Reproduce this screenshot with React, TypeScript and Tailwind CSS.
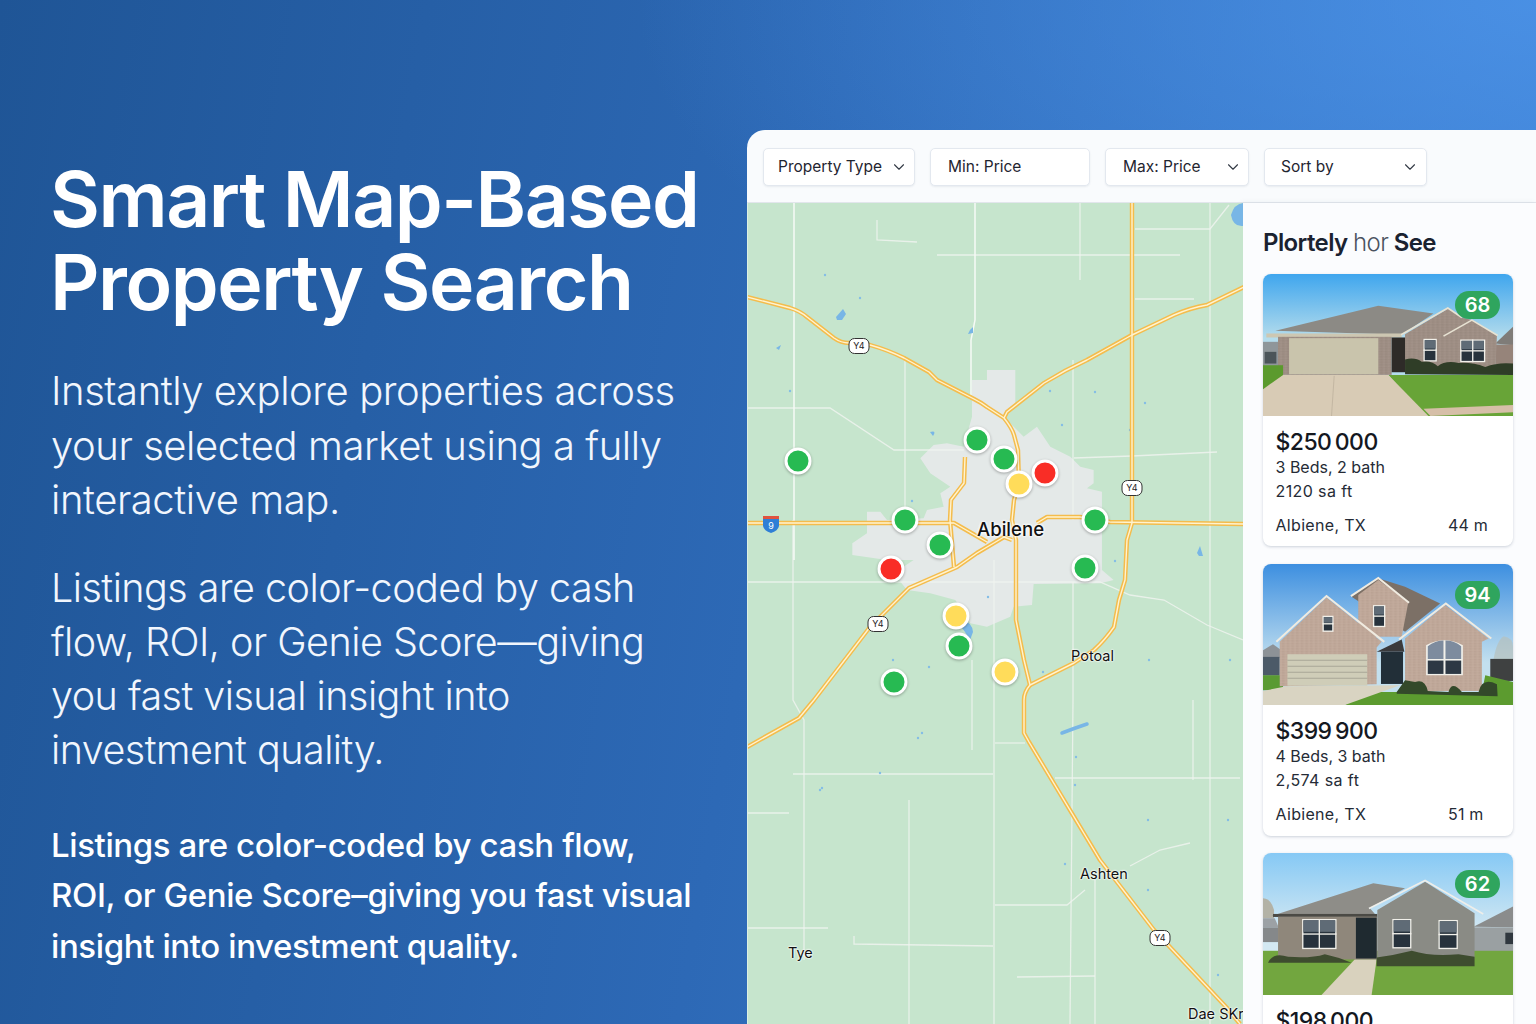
import { ChevronDown } from "lucide-react";

const roads = [
  "M747 297 L790 308 Q800 311 807 317 L834 338 Q841 343 849 343 L870 345 Q888 350 904 358 L929 372 L937 380 L974 399 Q982 403 987 407 L1004 418 Q1012 428 1014 435 L1018 450 L1019 484 L1014 500 L1012 520 L1016 540 L1016 620 L1024 660 L1030 685 Q1024 692 1024 700 L1024 733 L1029 742 L1100 860 L1154 930 L1227 1008 L1240 1024",
  "M1004 418 L1007 412 L1044 383 Q1065 370 1087 360 L1132 335 L1174 315 Q1190 308 1207 305 L1244 287",
  "M1132 203 L1132 523 L1127 540 L1125 580 L1119 600 L1114 627 Q1105 640 1094 650 L1074 663 L1030 685",
  "M747 523 L954 523 L987 542",
  "M1012 540 L1004 537 L977 553 L957 567 L909 588 L870 627 L814 700 L799 718 L747 747",
  "M1037 523 L1047 517 L1080 517 L1110 522 L1244 524",
  "M965 457 L964 483 L951 500 L950 520 L954 567",
];

const minorRoads = [
  "M793 520 L793 700 L804 720 L804 960",
  "M1080 203 L1080 280",
  "M1210 203 L1210 1024",
  "M905 360 L905 510",
  "M1073 360 L1073 520",
  "M1073 582 L1073 700 L1070 1024",
  "M994 560 L994 1024",
  "M972 660 L972 750",
  "M909 800 L909 1024",
  "M1095 880 L1095 1024",
  "M1193 700 L1193 780",
  "M975 255 L1180 255",
  "M747 408 L830 408 L894 450 L964 450",
  "M1074 458 L1132 456 L1217 452",
  "M747 582 L1100 582 L1130 595 L1164 600 L1207 625 L1243 640",
  "M793 774 L993 774",
  "M1055 778 L1240 778",
  "M995 743 L1025 743",
  "M995 905 L1067 905 L1085 890",
  "M854 936 L854 944 L993 946",
  "M1017 977 L1095 976",
  "M747 928 L828 928",
  "M747 813 L789 813",
  "M877 220 L877 240 L917 242",
  "M1135 229 L1210 229 L1229 205",
  "M1135 299 L1194 299",
  "M1130 866 L1160 850 L1190 843",
  "M937 255 L975 255",
];

const majorMinorRoads = ["M794 203 L794 560", "M975 203 L975 320 L971 340 L971 395"];

const water = [
  "M1231 215 Q1234 204 1243 203 L1243 226 Q1233 227 1231 215Z",
  "M836 317 L843 309 L846 314 L842 320 L837 320Z",
  "M970 330 L973 327 L973 333 L968 334Z",
  "M776 348 L781 345 L779 350Z",
  "M962 620 Q972 622 973 632 L970 640 Q964 630 962 628Z",
  "M1197 553 L1200 546 L1203 556 L1199 556Z",
  "M930 432 Q937 430 933 436Z",
];

const waterDots = [
  [825, 275], [860, 298], [1062, 425], [1050, 391], [1095, 392], [1145, 403],
  [1130, 430], [912, 501], [950, 500], [790, 391], [1115, 561], [988, 597],
  [929, 667], [1043, 672], [893, 660], [1230, 660], [1149, 660], [820, 790],
  [918, 738], [922, 733], [880, 773], [822, 788], [1076, 757], [1075, 785],
  [1148, 820], [1148, 890], [1228, 820], [1218, 975], [1065, 864],
];

const pins = [
  { x: 798, y: 461, c: "bg-[#27ba52]" },
  { x: 977, y: 440, c: "bg-[#27ba52]" },
  { x: 1004, y: 459, c: "bg-[#27ba52]" },
  { x: 1045, y: 473, c: "bg-[#f92d26]" },
  { x: 1019, y: 484, c: "bg-[#ffdc5a]" },
  { x: 905, y: 520, c: "bg-[#27ba52]" },
  { x: 940, y: 545, c: "bg-[#27ba52]" },
  { x: 1095, y: 520, c: "bg-[#27ba52]" },
  { x: 1085, y: 568, c: "bg-[#27ba52]" },
  { x: 891, y: 569, c: "bg-[#f92d26]" },
  { x: 956, y: 616, c: "bg-[#ffdc5a]" },
  { x: 959, y: 646, c: "bg-[#27ba52]" },
  { x: 1005, y: 672, c: "bg-[#ffdc5a]" },
  { x: 894, y: 682, c: "bg-[#27ba52]" },
];

const shields = [
  { x: 859, y: 346 },
  { x: 1132, y: 488 },
  { x: 878, y: 624 },
  { x: 1160, y: 938 },
];

const places = [
  { name: "Potoal", x: 1071, y: 647 },
  { name: "Ashten", x: 1080, y: 865 },
  { name: "Tye", x: 788, y: 944 },
  { name: "Dae SKr", x: 1188, y: 1005 },
];

function Win({ x, y, w, h, split }: { x: number; y: number; w: number; h: number; split?: boolean }) {
  return (
    <g>
      <rect x={x} y={y} width={w} height={h} fill="#f1f0ea" />
      <rect x={x + 4} y={y + 4} width={w - 8} height={h - 8} fill="#27323c" />
      <rect x={x + 4} y={y + 4} width={w - 8} height={(h - 8) * 0.42} fill="#5f6b76" />
      <rect x={x} y={y + h * 0.5 - 2} width={w} height={4} fill="#f1f0ea" />
      {split && <rect x={x + w / 2 - 2} y={y} width={4} height={h} fill="#f1f0ea" />}
    </g>
  );
}

function Brick({ id, color }: { id: string; color: string }) {
  return (
    <pattern id={id} width="14" height="8" patternUnits="userSpaceOnUse">
      <rect width="14" height="8" fill={color} />
      <rect y="0" width="7" height="4" fill="#000" opacity="0.03" />
      <rect x="8" y="4" width="6" height="4" fill="#fff" opacity="0.04" />
    </pattern>
  );
}

function HouseOne() {
  return (
    <svg viewBox="55 42 748 425" preserveAspectRatio="none" className="h-full w-full">
      <defs>
        <linearGradient id="sky1" x1="0" y1="0" x2="0" y2="1">
          <stop offset="0" stopColor="#3fa6ee" />
          <stop offset="0.45" stopColor="#b4dcec" />
        </linearGradient>
        <Brick id="brick1" color="#9e8e84" />
      </defs>
      <rect x="55" y="42" width="748" height="425" fill="url(#sky1)" />
      <rect x="55" y="245" width="50" height="72" fill="#8f969a" />
      <rect x="60" y="275" width="35" height="35" fill="#4b5459" />
      <polygon points="750,250 803,200 803,255" fill="#7f7c78" />
      <rect x="750" y="253" width="53" height="60" fill="#96847a" />
      <polygon points="92,212 400,137 565,160 470,224" fill="#8c8a85" />
      <rect x="65" y="220" width="405" height="12" fill="#cdc7b2" />
      <rect x="100" y="230" width="340" height="114" fill="url(#brick1)" />
      <rect x="133" y="234" width="267" height="108" fill="#c9c4ac" />
      <rect x="440" y="232" width="42" height="104" fill="#2e2b28" />
      <polygon points="480,222 610,145 650,172 680,180 755,226 750,332 480,332" fill="url(#brick1)" />
      <path d="M468 224 L608 144 L650 172 M595 228 L680 180 L757 226" fill="none" stroke="#e7e2d2" strokeWidth="5" />
      <Win x={535} y={236} w={40} h={68} />
      <Win x={645} y={238} w={75} h={68} split />
      <path d="M480 342 L480 298 Q510 290 530 305 Q560 300 578 318 Q600 300 640 308 Q680 305 720 320 Q760 305 803 310 L803 344Z" fill="#2f3d27" />
      <rect x="55" y="315" width="60" height="75" fill="#5b9a2d" />
      <polygon points="430,344 803,344 803,467 540,467" fill="#68a437" />
      <polygon points="115,344 430,344 550,467 55,467 55,387" fill="#d8cbb5" />
      <line x1="268" y1="347" x2="260" y2="467" stroke="#b8ad99" strokeWidth="2" />
      <polygon points="535,445 803,434 803,456 556,467" fill="#d6bfa8" />
    </svg>
  );
}

function HouseTwo() {
  return (
    <svg viewBox="55 12 748 422" preserveAspectRatio="none" className="h-full w-full">
      <defs>
        <linearGradient id="sky2" x1="0" y1="0" x2="0" y2="1">
          <stop offset="0" stopColor="#3d8fe0" />
          <stop offset="0.7" stopColor="#c3e0ef" />
        </linearGradient>
        <Brick id="brick2" color="#c0a899" />
      </defs>
      <rect x="55" y="12" width="748" height="422" fill="url(#sky2)" />
      <polygon points="55,270 85,252 110,270 110,292 55,292" fill="#8d9297" />
      <rect x="55" y="290" width="50" height="56" fill="#4c5a68" />
      <path d="M745 296 Q755 240 775 228 Q803 232 803 260 L803 296Z" fill="#b7c0bc" opacity="0.7" />
      <rect x="735" y="296" width="68" height="66" fill="#3f4141" />
      <rect x="55" y="345" width="60" height="45" fill="#5a9a33" />
      <polygon points="300,434 360,395 710,395 720,345 803,365 803,434" fill="#5c9b2f" />
      <polygon points="55,392 125,378 465,375 300,434 55,434" fill="#d9d4c2" />
      <polygon points="400,55 480,80 585,130 480,215 320,110" fill="#7c7066" />
      <polygon points="340,105 400,60 490,125 470,230 340,230" fill="url(#brick2)" />
      <polygon points="105,245 245,112 410,245 395,262 395,372 105,378" fill="url(#brick2)" />
      <polygon points="480,235 600,135 730,235 710,245 710,392 480,392" fill="url(#brick2)" />
      <path d="M95 245 L245 108 L418 245 M318 108 L400 54 L492 128 M462 238 L602 130 L738 235" fill="none" stroke="#f0ebe0" strokeWidth="6" />
      <rect x="128" y="282" width="239" height="94" fill="#cfcdb8" />
      <path d="M128 300 H367 M128 318 H367 M128 336 H367 M128 354 H367" stroke="#a9a796" strokeWidth="3" />
      <polygon points="395,275 470,238 478,275" fill="#3a3a3c" />
      <rect x="408" y="275" width="66" height="96" fill="#222f38" />
      <Win x={233} y={167} w={33} h={48} />
      <Win x={384} y={135} w={37} h={66} />
      <path d="M543 345 V255 Q598 225 653 255 V345Z" fill="#f1f0ea" />
      <path d="M548 296 V258 Q570 241 595 241 V296Z M601 296 V241 Q628 241 648 258 V296Z" fill="#7d8b9e" />
      <rect x="548" y="301" width="47" height="40" fill="#2d3844" />
      <rect x="601" y="301" width="47" height="40" fill="#2d3844" />
      <path d="M455 395 L480 360 L510 365 Q540 355 548 392 L610 395 Q620 360 650 395 L700 395 Q710 350 755 372 L757 408 L455 400Z" fill="#33492a" />
    </svg>
  );
}

function HouseThree() {
  return (
    <svg viewBox="55 880 748 424" preserveAspectRatio="none" className="h-full w-full">
      <defs>
        <linearGradient id="sky3" x1="0" y1="0" x2="0" y2="1">
          <stop offset="0" stopColor="#86c9f5" />
          <stop offset="0.55" stopColor="#d3e8f2" />
        </linearGradient>
      </defs>
      <rect x="55" y="880" width="748" height="424" fill="url(#sky3)" />
      <path d="M55 1015 Q78 1015 88 1050 L88 1075 L55 1075Z" fill="#b3b2a6" />
      <polygon points="55,1075 90,1075 102,1102 55,1102" fill="#9ca1a5" />
      <rect x="55" y="1102" width="46" height="44" fill="#85888a" />
      <polygon points="685,1100 803,1040 803,1102" fill="#8a8c8c" />
      <rect x="685" y="1102" width="118" height="74" fill="#9aa0a2" />
      <rect x="780" y="1118" width="23" height="34" fill="#30383f" />
      <rect x="55" y="1172" width="748" height="132" fill="#72a63f" />
      <polygon points="330,1197 395,1197 380,1304 230,1304" fill="#d9d2be" />
      <polygon points="80,1068 385,970 480,985 375,1045 397,1070" fill="#8e8d88" />
      <rect x="85" y="1062" width="312" height="9" fill="#4b4a45" />
      <rect x="100" y="1070" width="297" height="128" fill="#8f877b" />
      <polygon points="397,1050 540,966 688,1060 688,1196 397,1196" fill="#8a8b85" />
      <path d="M372 1046 L540 962 L714 1062" fill="none" stroke="#eeeeea" strokeWidth="5" />
      <rect x="333" y="1073" width="62" height="122" fill="#1f2a30" />
      <Win x={172} y={1077} w={103} h={90} split />
      <Win x={442} y={1077} w={57} h={88} />
      <Win x={580} y={1080} w={58} h={87} />
      <path d="M70 1208 Q85 1175 130 1190 Q200 1195 240 1182 Q280 1190 320 1208Z" fill="#3e4c2f" />
      <path d="M395 1218 L395 1192 Q450 1185 500 1172 Q560 1190 640 1182 L688 1190 L688 1218Z" fill="#3e4c2f" />
    </svg>
  );
}

const listings = [
  { price: "$250 000", beds: "3 Beds, 2 bath", area: "2120 sa ft", place: "Albiene, TX", dist: "44 m", score: 68, house: <HouseOne />, h: "h-[142px]" },
  { price: "$399 900", beds: "4 Beds, 3 bath", area: "2,574 sa ft", place: "Aibiene, TX", dist: "51 m", score: 94, house: <HouseTwo />, h: "h-[141px]" },
  { price: "$198 000", beds: "3 Beds, 2 bath", area: "1,640 sa ft", place: "Abilene, TX", dist: "38 m", score: 62, house: <HouseThree />, h: "h-[142px]" },
];

function FilterBox({ label, width, pad, chevron }: { label: string; width: string; pad: string; chevron?: boolean }) {
  return (
    <div className={`flex h-[38px] items-center justify-between rounded-[5px] border border-[#e3e8ef] bg-white text-[15.5px] text-[#1f2530] shadow-[0_1px_2px_rgba(30,50,80,0.08)] ${width} ${pad}`}>
      <span>{label}</span>
      {chevron && <ChevronDown size={18} strokeWidth={1.5} className="text-[#333a45]" />}
    </div>
  );
}

function MapView() {
  return (
    <div className="relative h-[821px] w-[496px] shrink-0 overflow-hidden border-l border-[#dcefe2] bg-[#c6e5cd]">
      <svg viewBox="747 203 496 821" className="absolute left-[-1px] top-0 h-[821px] w-[496px]">
        <g transform="translate(747 360) scale(0.3333)">
          <polygon
            fill="#e4e9e8"
            points="720,30 805,30 805,130 770,170 830,230 870,200 910,260 970,290 1000,320 1040,330 1040,370 1020,385 1065,395 1065,630 1100,660 1060,670 860,672 855,735 800,740 790,770 720,800 670,790 625,720 550,700 480,690 440,640 500,600 420,600 316,585 316,550 360,520 360,455 400,455 420,480 530,475 540,450 590,440 580,400 610,380 550,340 520,295 560,255 600,250 650,260 675,170 675,60 720,60"
          />
        </g>
        {minorRoads.map((d) => (
          <path key={d} d={d} fill="none" stroke="#eef3ee" strokeWidth="1.3" opacity="0.85" />
        ))}
        {majorMinorRoads.map((d) => (
          <path key={d} d={d} fill="none" stroke="#f6faf6" strokeWidth="1.5" />
        ))}
        {water.map((d) => (
          <path key={d} d={d} fill="#78b6e6" />
        ))}
        <path d="M1062 733 Q1075 728 1087 724" fill="none" stroke="#78b6e6" strokeWidth="3.5" strokeLinecap="round" />
        {waterDots.map(([x, y]) => (
          <circle key={`${x}-${y}`} cx={x} cy={y} r="1.2" fill="#84bde6" />
        ))}
        {roads.map((d) => (
          <path key={d} d={d} fill="none" stroke="#f4bc4c" strokeWidth="4.4" strokeLinejoin="round" />
        ))}
        {roads.map((d) => (
          <path key={`${d}-in`} d={d} fill="none" stroke="#fff3cf" strokeWidth="1.4" strokeLinejoin="round" />
        ))}
        <path d="M763 518 H779 V526 Q778 531 771 533 Q764 531 763 526Z" fill="#2f7fd6" />
        <path d="M763 516 H779 V519 H763Z" fill="#e0533f" />
        <text x="771" y="529" textAnchor="middle" fontSize="9" fontFamily="Inter, sans-serif" fill="#fff">
          9
        </text>
      </svg>

      {/* markers and labels sit at map coordinates */}
      {shields.map((s) => (
        <span
          key={`${s.x}`}
          className="absolute flex h-[16px] w-[21px] -translate-x-1/2 -translate-y-1/2 items-center justify-center rounded-[6px] border border-[#333] bg-white text-[9px] text-[#222]"
          style={{ left: s.x - 748, top: s.y - 203 }}
        >
          Y4
        </span>
      ))}
      {pins.map((p) => (
        <span
          key={`${p.x}-${p.y}`}
          className={`absolute h-[27px] w-[27px] -translate-x-1/2 -translate-y-1/2 rounded-full border-[3px] border-white shadow-[0_1px_3px_rgba(0,0,0,0.3)] ${p.c}`}
          style={{ left: p.x - 748, top: p.y - 203 }}
        />
      ))}
      <span className="absolute left-[229px] top-[313px] text-[18.6px] font-medium leading-[26px] text-[#111] [text-shadow:0_0_3px_#fff,0_0_3px_#fff,0_0_3px_#fff]">
        Abilene
      </span>
      {places.map((p) => (
        <span
          key={p.name}
          className="absolute whitespace-nowrap text-[14.5px] leading-[17px] text-[#111] [text-shadow:0_0_2px_#fff,0_0_2px_#fff,0_0_2px_#fff]"
          style={{ left: p.x - 748, top: p.y - 203 }}
        >
          {p.name}
        </span>
      ))}
    </div>
  );
}

export default function App() {
  return (
    <div className="flex h-screen w-full overflow-hidden bg-[radial-gradient(ellipse_900px_420px_at_100%_0%,rgba(78,150,235,0.75),rgba(78,150,235,0)),linear-gradient(100deg,#1f5596_0%,#2d69b6_50%,#3f82d6_100%)] font-['Inter',sans-serif]">
      <div className="w-[747px] shrink-0 pl-[51px] pt-[158px] text-white">
        <h1 className="-ml-[1px] text-[76.8px] font-semibold leading-[83px] tracking-[-0.019em]">
          Smart Map-Based
          <br />
          Property Search
        </h1>
        <p className="mt-[40px] text-[40px] font-[350] leading-[54.5px] tracking-[-0.011em] text-[#f1f6fd]">
          Instantly explore properties across
          <br />
          your selected market using a fully
          <br />
          interactive map.
        </p>
        <p className="mt-[33px] text-[39.5px] font-[350] leading-[54.3px] tracking-[-0.013em] text-[#f1f6fd]">
          Listings are color-coded by cash
          <br />
          flow, ROI, or Genie Score—giving
          <br />
          you fast visual insight into
          <br />
          investment quality.
        </p>
        <p className="mt-[42px] text-[33px] font-medium leading-[50.5px] tracking-[-0.012em]">
          Listings are color-coded by cash flow,
          <br />
          ROI, or Genie Score–giving you fast visual
          <br />
          insight into investment quality.
        </p>
      </div>

      <div className="mt-[130px] flex h-[894px] w-[789px] shrink-0 flex-col overflow-hidden rounded-tl-[18px] bg-[#f9fbfd]">
        <div className="flex h-[73px] shrink-0 items-center gap-[15px] border-b border-[#e2e6ec] pl-[16px] pt-[2px]">
          <FilterBox label="Property Type" width="w-[152px]" pad="pl-[14px] pr-[6px]" chevron />
          <FilterBox label="Min: Price" width="w-[160px]" pad="pl-[17px]" />
          <FilterBox label="Max: Price" width="w-[144px]" pad="pl-[17px] pr-[6px]" chevron />
          <FilterBox label="Sort by" width="w-[163px]" pad="pl-[16px] pr-[7px]" chevron />
        </div>
        <div className="flex min-h-0 flex-1">
          <MapView />
          <div className="flex-1 bg-[#fbfcfe] pl-[20px] shadow-[-2px_0_6px_rgba(40,60,90,0.08)]">
            <h2 className="mt-[24px] text-[24px] font-semibold leading-[32px] tracking-[-0.025em] text-[#1a2230]">
              Plortely <span className="font-light text-[#4a5260]">hor</span> See
            </h2>
            <div className="mt-[15px] flex w-[250px] flex-col gap-[17.5px]">
              {listings.map((l) => (
                <div key={l.score} className="flex h-[272px] shrink-0 flex-col overflow-hidden rounded-[8px] bg-white shadow-[0_1px_3px_rgba(40,60,90,0.22)]">
                  <div className={`relative shrink-0 ${l.h}`}>
                    {l.house}
                    <span className="absolute right-[13px] top-[17px] flex h-[28px] w-[45px] items-center justify-center rounded-full bg-[#2fa55e] text-[20px] font-semibold text-white">
                      {l.score}
                    </span>
                  </div>
                  <div className="pl-[12.5px] pt-[12px] text-[16px] leading-[24px] text-[#252b36]">
                    <div className="text-[23px] font-medium leading-[28px] tracking-[-0.025em] text-[#14181f] [word-spacing:-2px]">{l.price}</div>
                    <div className="mt-[-1px]">{l.beds}</div>
                    <div className="tracking-[0.025em]">{l.area}</div>
                    <div className="mt-[10px] flex">
                      <span className="tracking-[0.02em]">{l.place}</span>
                      <span className="ml-auto w-[65px] tracking-[0.01em]">{l.dist}</span>
                    </div>
                  </div>
                </div>
              ))}
            </div>
          </div>
        </div>
      </div>
    </div>
  );
}
